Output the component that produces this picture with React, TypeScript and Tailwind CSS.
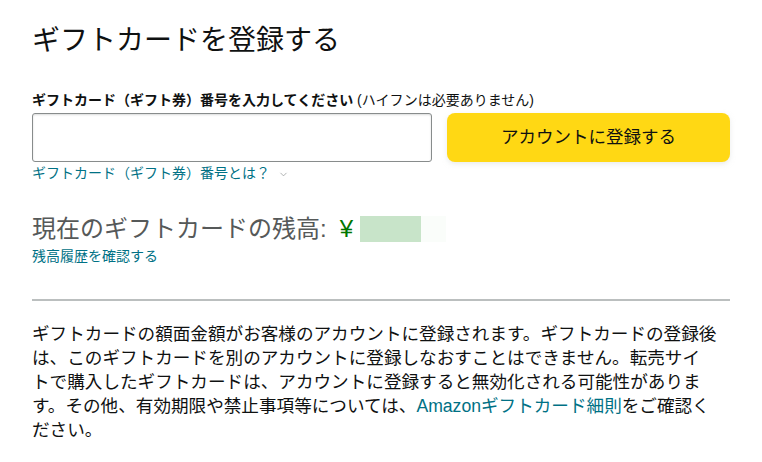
import { ChevronDown } from "lucide-react";

const font = "font-['Liberation_Sans','Noto_Sans_CJK_JP',sans-serif]";

export default function App() {
  return (
    <div className={`min-h-screen bg-white px-8 pt-[23px] text-[#0f1111] ${font}`}>
      <h1 className="text-[28px] leading-[36px] font-normal">ギフトカードを登録する</h1>

      <div className="mt-[31px] text-[14px] leading-[20px]">
        <span className="font-bold">ギフトカード（ギフト券）番号を入力してください</span>{" "}
        <span>(ハイフンは必要ありません)</span>
      </div>

      <div className="mt-[3px] flex gap-[15px]">
        <input
          type="text"
          className="h-[49px] flex-1 rounded-[3px] border border-[#888c8c] px-3 outline-none shadow-[inset_0_1px_2px_rgba(15,17,17,0.15)]"
        />
        <button
          type="button"
          className="h-[49px] w-[283px] rounded-[8px] bg-[#ffd814] text-[17.5px] text-[#0f1111] shadow-[0_2px_5px_rgba(213,217,217,0.5)]"
        >
          アカウントに登録する
        </button>
      </div>

      <div className="mt-[1px] flex items-center gap-[8px] text-[14px] leading-[20px] text-[#007185]">
        <span>ギフトカード（ギフト券）番号とは？</span>
        <ChevronDown size={11} strokeWidth={1.5} className="mt-[2px] text-[#8c9090]" />
      </div>

      <div className="mt-[30px] flex items-center text-[24px] leading-[32px] text-[#565959]">
        <span>現在のギフトカードの残高:</span>
        <span className="ml-[13px] text-[#007600]">¥</span>
        <span className="ml-[7px] flex h-[26px]">
          <span className="w-[61px] bg-[#c8e4c9]" />
          <span className="w-[25px] bg-[#fafdfa]" />
        </span>
      </div>

      <div className="mt-[1px] text-[14px] leading-[20px] text-[#007185]">残高履歴を確認する</div>

      <hr className="mt-[33px] border-0 border-t-2 border-[#bbbfbf]" />

      <p className="mt-[21px] text-[17.6px] leading-[24px]">
        ギフトカードの額面金額がお客様のアカウントに登録されます。ギフトカードの登録後
        <br />
        は、このギフトカードを別のアカウントに登録しなおすことはできません。転売サイ
        <br />
        トで購入したギフトカードは、アカウントに登録すると無効化される可能性がありま
        <br />
        す。その他、有効期限や禁止事項等については、
        <span className="text-[#007185]">Amazonギフトカード細則</span>をご確認く
        <br />
        ださい。
      </p>
    </div>
  );
}
